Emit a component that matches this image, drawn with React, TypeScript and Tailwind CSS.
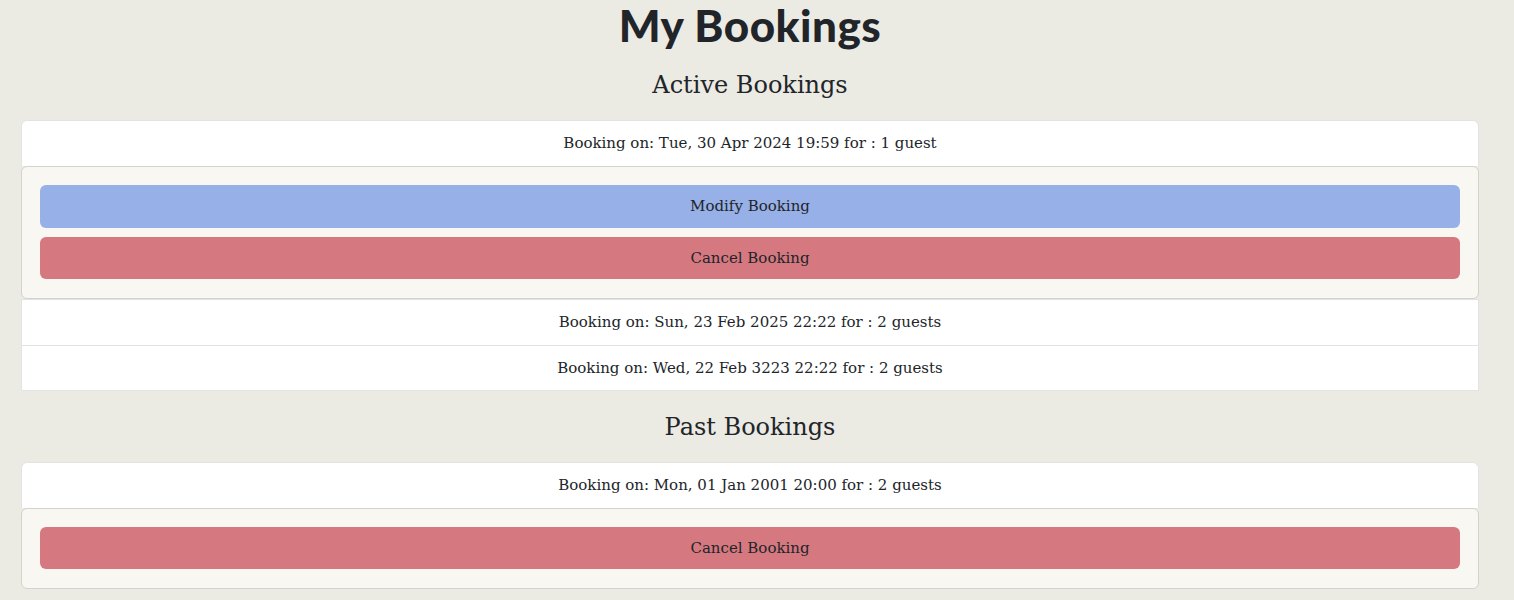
import React from 'react';

interface Booking {
    label: string;
    canModify?: boolean;
    open?: boolean;
}

const active: Booking[] = [
    { label: 'Booking on: Tue, 30 Apr 2024 19:59 for : 1 guest', canModify: true, open: true },
    { label: 'Booking on: Sun, 23 Feb 2025 22:22 for : 2 guests' },
    { label: 'Booking on: Wed, 22 Feb 3223 22:22 for : 2 guests' },
];

const past: Booking[] = [
    { label: 'Booking on: Mon, 01 Jan 2001 20:00 for : 2 guests', open: true },
];

function BookingList({ items }: { items: Booking[] }) {
    return (
        <div className="flex flex-col">
            {items.map((b, i) => (
                <div key={i} className="flex flex-col">
                    <div
                        className={
                            'h-[46px] flex items-center justify-center bg-white border-x border-[#e2e3e5] text-[15px] text-[#212529] ' +
                            (i === 0 ? 'rounded-t-[6px] border-t ' : 'border-t ') +
                            (i === items.length - 1 && !b.open ? 'border-b' : '')
                        }
                    >
                        {b.label}
                    </div>
                    {b.open && (
                        <div className="bg-[#f8f7f2] border border-[#d3d2cd] rounded-[6px] px-[18px] pt-[18px] pb-[19px] flex flex-col gap-[9px]">
                            {b.canModify && (
                                <button type="button" className="h-[43px] rounded-[6px] bg-[#97b0e7] text-[15px] text-[#212529]">
                                    Modify Booking
                                </button>
                            )}
                            <button type="button" className="h-[42px] rounded-[6px] bg-[#d57880] text-[15px] text-[#212529]">
                                Cancel Booking
                            </button>
                        </div>
                    )}
                </div>
            ))}
        </div>
    );
}

export default function App() {
    return (
        <div className="min-h-screen bg-[#ebeae3] pl-[21px] pr-[35px] font-['DejaVu_Serif',serif] text-[#212529]">
            <h1 className="h-[50px] flex items-center justify-center text-[44px] font-black font-['Lato',sans-serif] tracking-[0.5px] text-[#212529]">
                My Bookings
            </h1>
            <h2 className="h-[70px] flex items-center justify-center text-[24px]">Active Bookings</h2>
            <BookingList items={active} />
            <h2 className="h-[71px] flex items-center justify-center text-[24px]">Past Bookings</h2>
            <BookingList items={past} />
        </div>
    );
}
